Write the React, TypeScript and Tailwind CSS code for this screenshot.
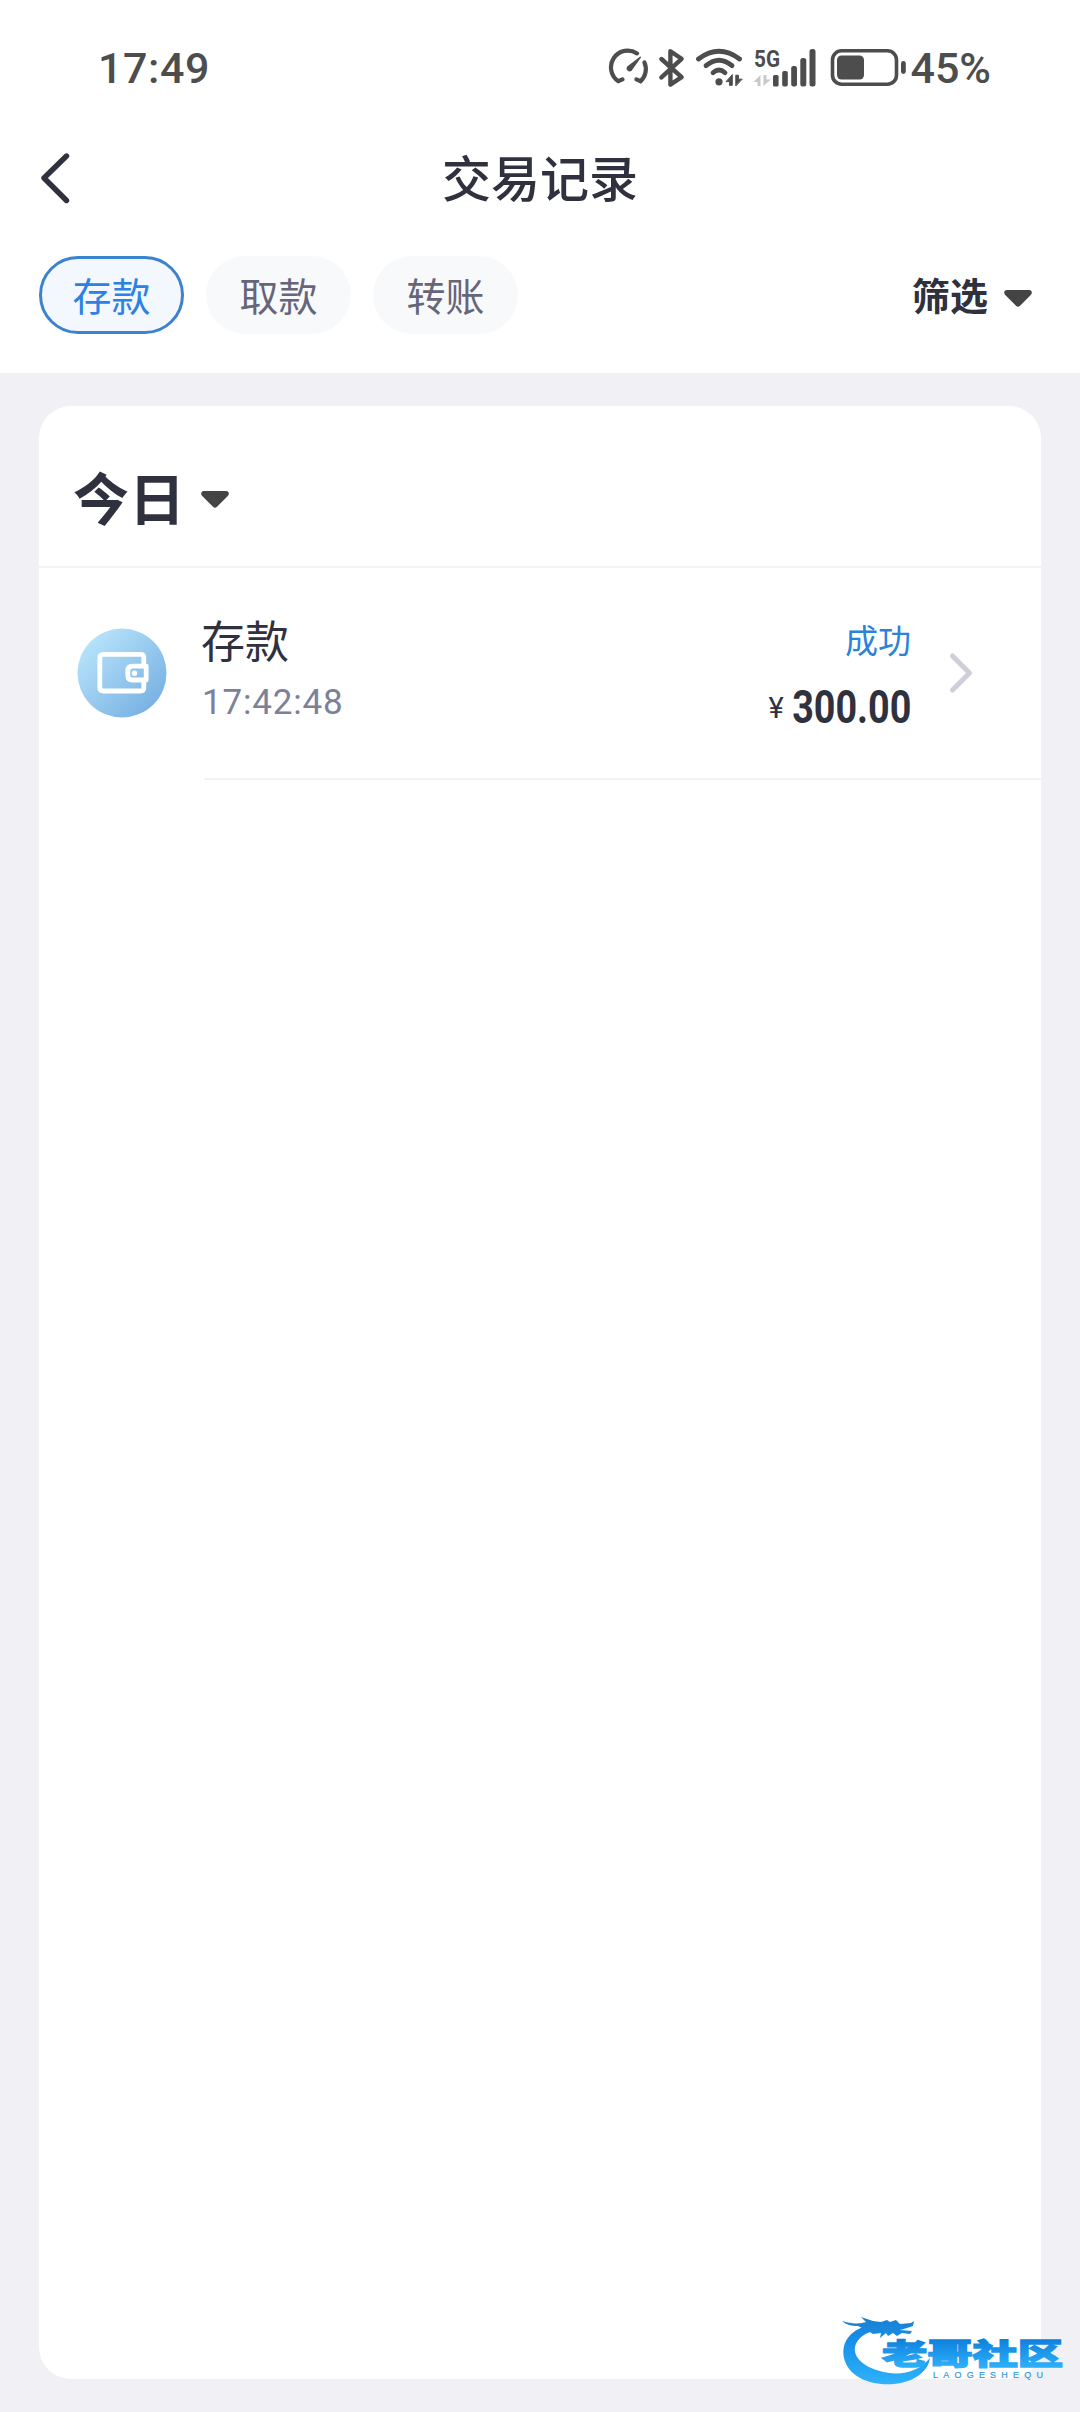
import { useState } from "react";

interface RecordItem {
  title: string;
  time: string;
  status: string;
  amount: string;
}

const TABS = ["存款", "取款", "转账"];

const RECORDS: RecordItem[] = [
  { title: "存款", time: "17:42:48", status: "成功", amount: "300.00" },
];

function StatusIcons() {
  return (
    <div className="flex items-center text-[#4d4d4d]">
      {/* Speed gauge */}
      <svg width="50" height="44" viewBox="0 0 50 44" fill="none" stroke="currentColor" strokeWidth="4.2" strokeLinecap="round">
        <path d="M29 7.4A16.4 16.4 0 0 0 10.4 35.2L14.4 33.4" />
        <path d="M36.4 16.4A16.4 16.4 0 0 1 32.6 35.2L28.4 33.4" />
        <path d="M32.4 11.2 19.6 21A2.5 2.5 0 0 0 23 24.4Z" fill="currentColor" strokeWidth="1.4" strokeLinejoin="round" />
      </svg>
      {/* Bluetooth */}
      <svg width="34" height="44" viewBox="0 0 34 44" fill="none" stroke="currentColor" strokeWidth="4.4" strokeLinecap="round" strokeLinejoin="round">
        <path d="M3.4 13 23.6 31.2 12.4 38.6V5.2L23.6 12.8 3.4 31.4" />
      </svg>
      {/* Wi-Fi */}
      <svg width="60" height="44" viewBox="0 0 60 44" fill="none" stroke="currentColor" strokeWidth="4.8" strokeLinecap="round">
        <path d="M6.5 13Q27 -2.4 47.5 13" />
        <path d="M14 19.7Q27 8.9 40 19.7" />
        <path d="M21 26.7Q27 21.4 33 26.7" />
        <circle cx="27" cy="35.8" r="3.6" fill="currentColor" stroke="none" />
        <path d="M40.3 29V39.3H37.5V35.6H34.4ZM43.8 39.6V29.2H46.4V33.2H49.8Z" fill="currentColor" strokeWidth="1" strokeLinejoin="round" />
      </svg>
      {/* 5G signal */}
      <svg width="72" height="44" viewBox="0 0 72 44" fill="currentColor" className="overflow-visible">
        <text x="2" y="21.3" fontFamily="Roboto, sans-serif" fontSize="24.5" fontWeight="700" textLength="26" lengthAdjust="spacingAndGlyphs">
          5G
        </text>
        <path d="M8.5 29V40H5.5V36H1.5ZM11.5 40V29H14.5V33.5H18.8Z" fill="#c9c9c9" />
        <rect x="21" y="29" width="5.6" height="11.5" rx="1.6" />
        <rect x="30.2" y="25" width="5.6" height="15.5" rx="1.8" />
        <rect x="39.2" y="20" width="5.8" height="20.5" rx="2.2" />
        <rect x="48.3" y="12" width="6" height="28.5" rx="2.5" />
        <rect x="57.5" y="3" width="6" height="37.5" rx="2.5" />
      </svg>
      {/* Battery */}
      <svg width="84" height="44" viewBox="0 0 84 44" fill="none">
        <rect x="8.5" y="4.8" width="64" height="33.4" rx="9" stroke="currentColor" strokeWidth="3.6" />
        <rect x="13" y="9.5" width="27" height="24" rx="4.5" fill="currentColor" />
        <rect x="77" y="15" width="4.8" height="13" rx="2.4" fill="currentColor" />
      </svg>
    </div>
  );
}

function Caret() {
  return (
    <svg width="28" height="17" viewBox="0 0 28 17" fill="#444">
      <path d="M3 0H25Q28 .3 27.8 3Q27.6 4.4 26.5 5.3L16 15.8Q14 17.6 12 15.8L1.5 5.3Q.4 4.4 .2 3Q0 .3 3 0Z" />
    </svg>
  );
}

function WalletIcon() {
  return (
    <svg width="90" height="90" viewBox="0 0 90 90" fill="none">
      <defs>
        <linearGradient id="wallet" x1="10" y1="10" x2="78" y2="78" gradientUnits="userSpaceOnUse">
          <stop stopColor="#b9e5fb" />
          <stop offset="1" stopColor="#78b1e3" />
        </linearGradient>
      </defs>
      <circle cx="45" cy="45" r="44.5" fill="url(#wallet)" />
      <g stroke="#fff" strokeWidth="4.8" strokeLinejoin="round">
        <path d="M66.8 37V29.5Q66.8 26.4 63.8 26.4H26.5Q22.8 26.4 22.8 30V59.5Q22.8 63 26.5 63H63.5Q66.8 63 66.8 60V52.5" />
        <path d="M69.2 38.2H55.5Q50.8 38.2 50.8 42.5V47.5Q50.8 52 55.5 52H69.2Z" />
      </g>
      <circle cx="57.5" cy="45.2" r="2.7" fill="#fff" />
    </svg>
  );
}

function CommunityLogo() {
  return (
    <svg className="absolute left-[836px] top-[2312px]" width="240" height="80" viewBox="0 0 240 80">
      <defs>
        <linearGradient id="logo" x1="0" y1="5" x2="0" y2="72" gradientUnits="userSpaceOnUse">
          <stop stopColor="#1a7fd0" />
          <stop offset="0.35" stopColor="#1690ea" />
          <stop offset="1" stopColor="#2eb2fa" />
        </linearGradient>
        <linearGradient id="logoText" x1="0" y1="27" x2="0" y2="55" gradientUnits="userSpaceOnUse">
          <stop stopColor="#0f80dc" />
          <stop offset="1" stopColor="#2cb0fa" />
        </linearGradient>
      </defs>
      {/* Dragon: curled body, head, whiskers */}
      <g fill="url(#logo)">
        <path d="M30 14C14 19 5 30 8 46C12 64 33 74 58 72C78 70 92 60 94 46C84 58 70 63 53 61C33 58 17 48 19 35C21 26 29 21 40 18Z" />
        <path d="M6 9C13 11 19 12 26 11L30 10L25 5L37 9L45 10L51 8L54 10L60 8L64 12L75 11L78 9L77 14L71 16L64 18L76 19L74 22L66 21L61 24L57 21L52 24L50 21L44 26L45 21L37 22L32 19L22 14C16 14 10 13 6 9Z" />
      </g>
      <text x="46" y="52.5" fontFamily="'Noto Sans CJK SC', sans-serif" fontSize="29" fontWeight="900" fill="url(#logoText)" stroke="url(#logoText)" strokeWidth="1.4" textLength="181" lengthAdjust="spacingAndGlyphs">
        老哥社区
      </text>
      <text x="97" y="66.4" fontFamily="'Liberation Sans', sans-serif" fontSize="9" fill="#3598e0" stroke="#3598e0" strokeWidth="0.2" textLength="110" lengthAdjust="spacing">
        LAOGESHEQU
      </text>
    </svg>
  );
}

export default function App() {
  const [tab, setTab] = useState(0);

  return (
    <div className="relative flex h-[2412px] w-[1080px] flex-col overflow-hidden bg-[#f0f0f5] font-['Noto_Sans_CJK_SC',sans-serif] text-[#30313f]">
      <header className="h-[373px] bg-white">
        <div className="flex h-[136px] items-center justify-between pl-[98px] pr-[89px] font-[Roboto,sans-serif] text-[43px] font-medium text-[#4d4d4d]">
          <span className="tracking-[0.6px]">17:49</span>
          <div className="flex items-center">
            <StatusIcons />
            <span className="ml-[2px]">45%</span>
          </div>
        </div>

        <div className="grid h-[84px] grid-cols-[200px_1fr_200px] items-center">
          <button type="button" aria-label="返回" className="pl-10">
            <svg width="30" height="52" viewBox="0 0 30 52" fill="none" stroke="#30313f" strokeWidth="5.4" strokeLinecap="round" strokeLinejoin="round">
              <path d="M26.5 4 4 26 26.5 48.5" />
            </svg>
          </button>
          <h1 className="pb-[5px] text-center text-[49px] font-medium leading-none">交易记录</h1>
        </div>

        <div className="mt-9 flex h-[78px] items-center gap-[22px] pl-[39px] pr-12">
          {TABS.map((label, i) => (
            <button
              key={label}
              type="button"
              onClick={() => setTab(i)}
              className={`flex h-[78px] w-[145px] items-center justify-center rounded-full pb-[2px] text-[39px] leading-none ${
                i === tab
                  ? "border-[3px] border-[#3b82d0] bg-[#f2f8fd] text-[#2b82e2]"
                  : "bg-[#f8f9fb] text-[#666579]"
              }`}
            >
              {label}
            </button>
          ))}
          <button type="button" className="ml-auto flex items-center gap-4 text-[38px] font-bold leading-none">
            <span className="pb-[3px]">筛选</span>
            <span className="pt-[6px]">
              <Caret />
            </span>
          </button>
        </div>
      </header>

      <main className="ml-[39px] mt-[33px] h-[1973px] w-[1002px] rounded-[32px] bg-white">
        <div className="flex h-[162px] items-center gap-4 border-b-2 border-[#f3f3f5] pl-[34px] pt-6">
          <h2 className="pb-1 text-[56px] font-bold leading-none">今日</h2>
          <span className="pt-[3px]">
            <Caret />
          </span>
        </div>

        {RECORDS.map((r) => (
          <div key={r.time} className="flex h-[212px] pl-[38px]">
            <div className="mt-[60px]">
              <WalletIcon />
            </div>
            <div className="ml-[37px] flex flex-1 border-b-2 border-[#f3f3f5]">
              <div className="-ml-[3px] mt-[48px]">
                <p className="text-[44px] leading-[46px]">{r.title}</p>
                <p className="ml-px mt-[19px] font-[Roboto,sans-serif] text-[35px] leading-[44px] tracking-[0.8px] text-[#7c8099]">{r.time}</p>
              </div>
              <div className="ml-auto mt-[52px] text-right">
                <p className="text-[33px] leading-[38px] text-[#2b82d9]">{r.status}</p>
                <p className="mt-[22px] flex items-center justify-end font-[Roboto,sans-serif] leading-[52px]">
                  <span className="pt-[2px] text-[29px]">¥</span>
                  <span className="-ml-[18px] inline-block origin-right scale-x-[0.82] text-[46px] font-bold">{r.amount}</span>
                </p>
              </div>
              <svg className="ml-[37px] mr-[67px] mt-[84px]" width="26" height="42" viewBox="0 0 26 42" fill="none" stroke="#cfcfda" strokeWidth="5" strokeLinecap="round" strokeLinejoin="round">
                <path d="M4.5 4 21.5 21 4.5 38" />
              </svg>
            </div>
          </div>
        ))}
      </main>

      <CommunityLogo />
    </div>
  );
}
